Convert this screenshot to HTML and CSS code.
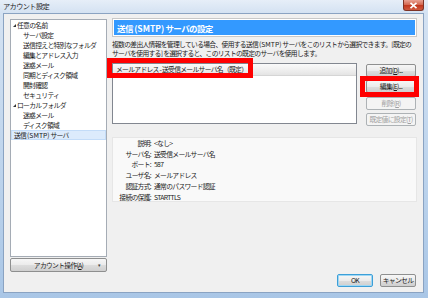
FILE: index.html
```html
<!DOCTYPE html>
<html lang="ja">
<head>
<meta charset="utf-8">
<title>アカウント設定</title>
<link rel="stylesheet" href="styles.css">
</head>
<body>
<div class="window">
  <div class="titlebar">
    <span class="title">アカウント設定</span>
    <span class="close"><svg width="9" height="7" viewBox="0 0 9 7"><path d="M1.5 0.8 L7.5 6.2 M7.5 0.8 L1.5 6.2" stroke="#fff" stroke-width="1.6"/></svg></span>
  </div>
  <div class="client">
    <div class="main">
      <div class="left">
        <div class="tree">
          <div class="row lvl0"><span class="tw"></span>任意の名前</div>
          <div class="row lvl1">サーバ設定</div>
          <div class="row lvl1">送信控えと特別なフォルダ</div>
          <div class="row lvl1">編集とアドレス入力</div>
          <div class="row lvl1">迷惑メール</div>
          <div class="row lvl1">同期とディスク領域</div>
          <div class="row lvl1">開封確認</div>
          <div class="row lvl1">セキュリティ</div>
          <div class="row lvl0"><span class="tw"></span>ローカルフォルダ</div>
          <div class="row lvl1">迷惑メール</div>
          <div class="row lvl1">ディスク領域</div>
          <div class="row sel">送信 <span class="lat">(SMTP)</span> サーバ</div>
        </div>
        <div class="btn acct"><span>アカウント操作(<u>A</u>)</span><span class="dd">▾</span></div>
      </div>
      <div class="right">
        <div class="header"><div class="hbar">送信 <span class="lat">(SMTP)</span> サーバの設定</div></div>
        <div class="desc">複数の差出人情報を管理している場合、使用する送信 <span class="lat">(SMTP)</span> サーバをこのリストから選択できます。[既定の<br>サーバを使用する] を選択すると、このリストの既定のサーバを使用します。</div>
        <div class="listrow">
          <div class="list">
            <div class="lhead">メールアドレス - 送受信メールサーバ名（既定）</div>
          </div>
          <div class="btncol">
            <div class="btn">追加(<u>D</u>)...</div>
            <div class="btn">編集(<u>E</u>)...</div>
            <div class="btn dis">削除(<u>R</u>)</div>
            <div class="btn dis">既定値に設定(<u>T</u>)</div>
          </div>
          <div class="mark m1"></div>
          <div class="mark m2"></div>
        </div>
        <div class="details">
          <div class="lab">説明:</div><div class="val">&lt;なし&gt;</div>
          <div class="lab">サーバ名:</div><div class="val">送受信メールサーバ名</div>
          <div class="lab">ポート:</div><div class="val">587</div>
          <div class="lab">ユーザ名:</div><div class="val">メールアドレス</div>
          <div class="lab">認証方式:</div><div class="val">通常のパスワード認証</div>
          <div class="lab">接続の保護:</div><div class="val">STARTTLS</div>
        </div>
      </div>
    </div>
    <div class="footer">
      <div class="btn ok">OK</div>
      <div class="btn">キャンセル</div>
    </div>
  </div>
</div>
</body>
</html>
```
FILE: styles.css
```css
* { box-sizing: border-box; }
html, body { margin: 0; padding: 0; }
body {
  width: 428px; height: 298px; overflow: hidden;
  font-family: "Noto Sans CJK JP", "Noto Sans", sans-serif;
  font-size: 6.8px; color: #1a1a1a; letter-spacing: -0.7px;
}
u { text-decoration: underline; }
.lat { letter-spacing: 0; }
.window {
  width: 428px; height: 298px;
  background: linear-gradient(to bottom, #e6eef8 0px, #d4e2f2 13px, #bcd3ec 60%, #a9c6e6 100%);
  padding: 0 4px 5px 3px;
  display: flex; flex-direction: column;
}
.titlebar {
  height: 13px; flex: none; display: flex; align-items: center; justify-content: space-between;
}
.title { font-size: 7.2px; letter-spacing: -0.6px; color: #222; padding-left: 0; line-height: 13px; }
.close {
  width: 21px; height: 11px; align-self: flex-start;
  background: linear-gradient(to bottom, #e9a192 0%, #d46a53 45%, #c2381f 55%, #cf5a3f 100%);
  border: 1px solid #7e3326; border-top: none;
  border-radius: 0 0 3px 3px;
  display: flex; align-items: center; justify-content: center;
}
.close svg { display: block; }
.client {
  flex: none; height: 280px; background: #f0f0f0;
  border: 1px solid #8aa3c2;
  display: flex; flex-direction: column;
}
.main { display: flex; padding: 5px 0 0 6px; height: 259px; flex: none; }
.left { width: 97px; display: flex; flex-direction: column; gap: 1px; flex: none; }
.tree {
  height: 238px; flex: none; background: #fff; border: 1px solid #a5acb5;
}
.row { height: 10px; line-height: 10px; white-space: nowrap; position: relative; }
.lvl0 { padding-left: 6px; }
.lvl1 { padding-left: 12px; }
.tw {
  position: absolute; left: 2px; top: 4px; width: 0; height: 0;
  border-left: 3px solid transparent; border-bottom: 3px solid #333;
}
.sel { background: #dcebfc; border: 1px solid #c3dcf8; line-height: 8px; padding-left: 2px; }
.btn {
  height: 13px; flex: none; line-height: 11px; text-align: center;
  border: 1px solid #8e8f8f; border-radius: 2px;
  background: linear-gradient(to bottom, #f6f6f6 0%, #ebebeb 50%, #dddddd 51%, #cfcfcf 100%);
  white-space: nowrap; color: #1a1a1a;
}
.btn.dis { color: #a0a0a0; background: #f4f4f4; border-color: #adb2b5; }
.acct { height: 14px; line-height: 12px; display: flex; justify-content: center; position: relative; }
.acct .dd { position: absolute; right: 6px; top: 0; font-size: 5px; color: #444; }
.right { margin-left: 5px; width: 305px; display: flex; flex-direction: column; flex: none; }
.header { border: 1px solid #c8c8c8; margin-top: -1px; flex: none; }
.hbar {
  height: 17px; background: #3399ff; color: #fff; font-weight: bold;
  font-size: 8.5px; letter-spacing: -0.6px; line-height: 16px; padding-left: 3px;
  border: 1px solid #fff; white-space: nowrap;
}
.desc { margin-top: 3px; line-height: 9px; white-space: nowrap; height: 18px; flex: none; }
.listrow { display: flex; margin-top: 5px; position: relative; flex: none; }
.list { width: 245px; height: 61px; background: #fff; border: 1px solid #828790; flex: none; }
.lhead {
  height: 12px; line-height: 11px; padding-left: 3px;
  background: linear-gradient(to bottom, #fafafa 0%, #f0f0f0 50%, #e4e4e4 100%);
  border-bottom: 1px solid #d5d5d5; white-space: nowrap;
}
.btncol { margin-left: 9px; width: 50px; display: flex; flex-direction: column; gap: 3.3px; padding-top: 1px; flex: none; }
.mark { position: absolute; border: 5px solid #ff0000; }
.m1 { left: -5px; top: -5px; width: 146px; height: 20px; }
.m2 { left: 248px; top: 13px; width: 59px; height: 21px; }
.details {
  margin-top: 11px; height: 65px; flex: none; background: #f9f9f9; border: 1px solid #e6e6e6;
  display: grid; grid-template-columns: 40px 1fr; grid-auto-rows: 10.8px; line-height: 10.8px;
}
.lab { text-align: right; padding-right: 2px; white-space: nowrap; }
.val { white-space: nowrap; padding-left: 1px; }
.footer { display: flex; justify-content: flex-end; gap: 7px; padding-right: 7px; margin-top: 1px; flex: none; }
.footer .btn { width: 36px; height: 13px; }
.footer .ok { border-color: #3c9fd8; box-shadow: inset 0 0 0 1px #9fd7f4; }
```
